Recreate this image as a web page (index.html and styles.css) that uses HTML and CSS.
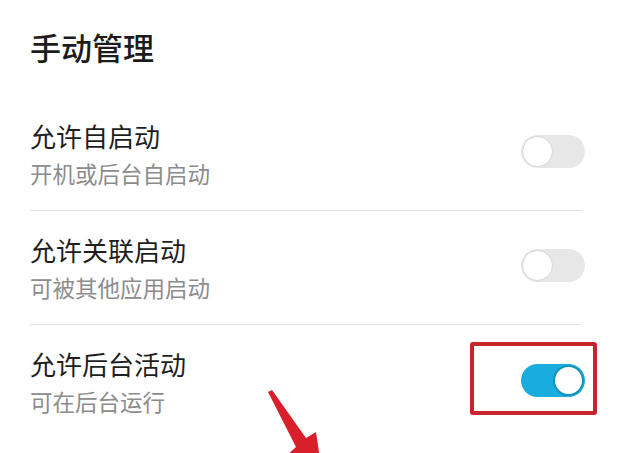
FILE: index.html
```html
<!DOCTYPE html>
<html lang="zh-CN">
<head>
<meta charset="utf-8">
<link rel="stylesheet" href="styles.css">
</head>
<body>
<div class="page">
  <div class="header">手动管理</div>
  <div class="row">
    <div class="texts">
      <div class="title">允许自启动</div>
      <div class="sub">开机或后台自启动</div>
    </div>
    <div class="switch"><span class="knob"></span></div>
  </div>
  <div class="row">
    <div class="texts">
      <div class="title">允许关联启动</div>
      <div class="sub">可被其他应用启动</div>
    </div>
    <div class="switch"><span class="knob"></span></div>
  </div>
  <div class="row last">
    <div class="texts">
      <div class="title">允许后台活动</div>
      <div class="sub">可在后台运行</div>
    </div>
    <div class="switch-wrap">
      <div class="switch on"><span class="knob"></span></div>
      <div class="highlight"></div>
    </div>
  </div>
  <svg class="arrow" width="120" height="90" viewBox="0 0 120 90">
    <path d="M26 10 L30 8 L64 56 L74 50 L80 90 L44 74 L54 65 Z" fill="#d8202c"/>
  </svg>
</div>
</body>
</html>
```
FILE: styles.css
```css
html, body {
  margin: 0;
  padding: 0;
  background: #ffffff;
}
body {
  font-family: "Noto Sans CJK SC", "Noto Sans", sans-serif;
  overflow: hidden;
}
.page {
  position: relative;
  width: 620px;
  height: 453px;
  overflow: hidden;
  padding: 0 38px 0 30px;
  box-sizing: border-box;
}
.header {
  font-size: 31px;
  line-height: 40px;
  font-weight: 500;
  color: #1c1c1c;
  padding: 27px 0 30px;
}
.row {
  display: flex;
  align-items: center;
  justify-content: space-between;
  padding: 20px 0;
  height: 73px;
  border-bottom: 1px solid #e3e3e3;
  box-sizing: content-box;
}
.row.last {
  border-bottom: none;
}
.texts {
  display: flex;
  flex-direction: column;
  gap: 4px;
  margin-top: -2px;
}
.title {
  font-size: 26px;
  line-height: 36px;
  color: #1e1e1e;
}
.sub {
  font-size: 22.5px;
  line-height: 30px;
  color: #8c8c8c;
}
.switch {
  width: 64px;
  height: 33px;
  border-radius: 17px;
  background: #e7e7e7;
  display: flex;
  align-items: center;
  box-sizing: border-box;
  margin-right: -3px;
  margin-top: -4px;
}
.knob {
  width: 31px;
  height: 31px;
  border-radius: 50%;
  background: #ffffff;
  border: 1.5px solid #d8d8d8;
  box-sizing: border-box;
  margin-left: 1px;
}
.switch.on {
  background: #19addf;
  justify-content: flex-end;
  margin: 0;
}
.switch.on .knob {
  margin-left: 0;
  margin-right: 1px;
  border: 2px solid #1694b8;
}
.switch-wrap {
  position: relative;
  margin-right: -3px;
  margin-top: -2px;
}
.highlight {
  position: absolute;
  left: -51px;
  top: -22px;
  width: 127px;
  height: 73px;
  border: 4px solid #c8242e;
  border-radius: 3px;
  box-sizing: border-box;
}
.arrow {
  position: absolute;
  left: 242px;
  top: 382px;
}
```
